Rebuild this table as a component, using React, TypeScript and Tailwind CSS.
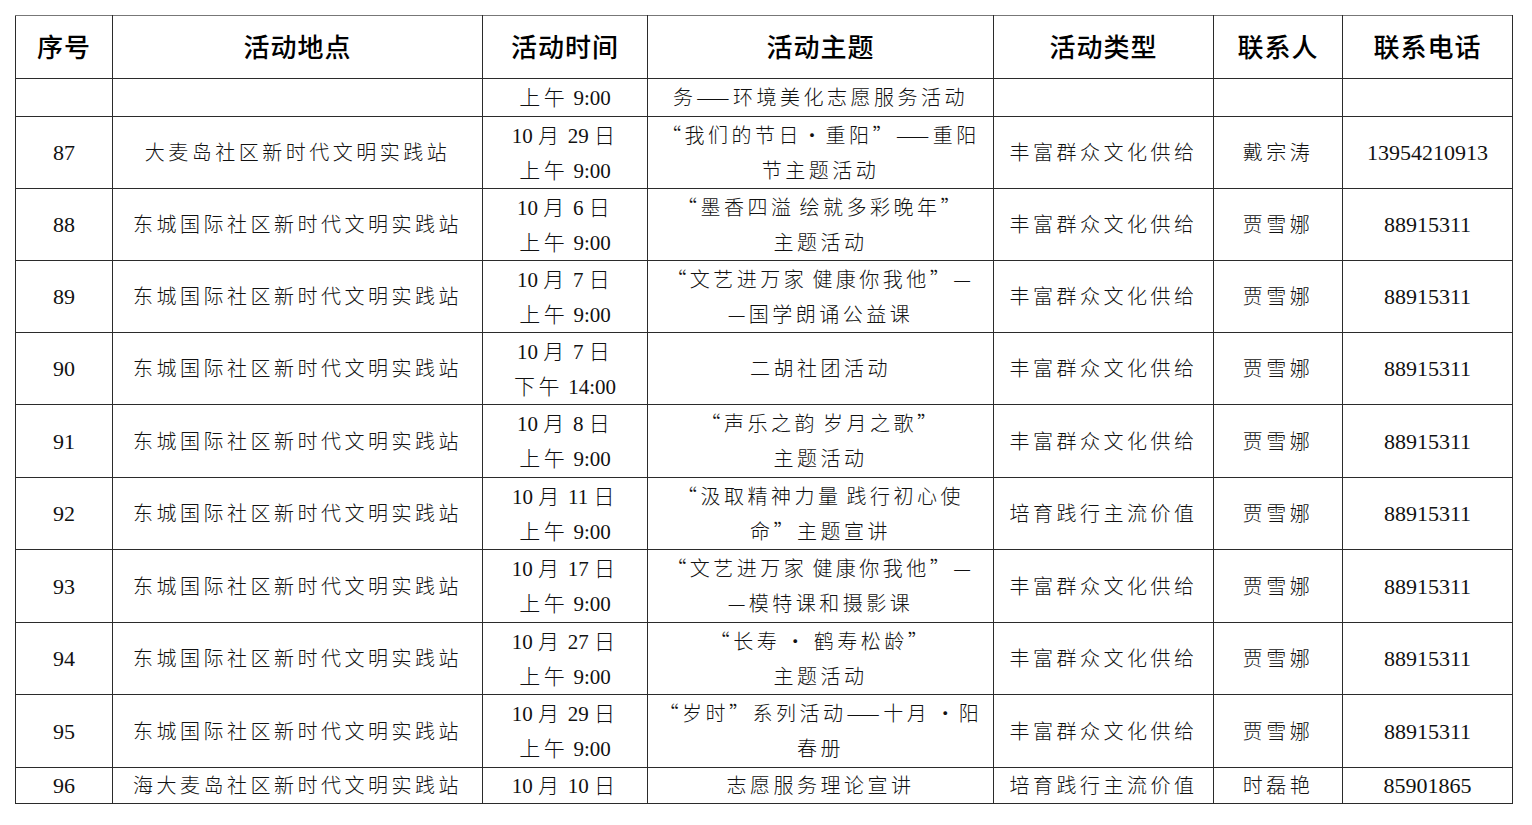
import React from 'react';

type Row = {
  no: string;
  place: string;
  time: string[];
  theme: string[];
  kind: string;
  person: string;
  phone: string;
  h: string;
};

const rows: Row[] = [
  { no: '', place: '', time: ['上午 9:00'], theme: ['务——环境美化志愿服务活动'], kind: '', person: '', phone: '', h: 'h-[38px]' },
  { no: '87', place: '大麦岛社区新时代文明实践站', time: ['10 月 29 日', '上午 9:00'], theme: ['“我们的节日•重阳”——重阳', '节主题活动'], kind: '丰富群众文化供给', person: '戴宗涛', phone: '13954210913', h: 'h-[72px]' },
  { no: '88', place: '东城国际社区新时代文明实践站', time: ['10 月 6 日', '上午 9:00'], theme: ['“墨香四溢 绘就多彩晚年”', '主题活动'], kind: '丰富群众文化供给', person: '贾雪娜', phone: '88915311', h: 'h-[72px]' },
  { no: '89', place: '东城国际社区新时代文明实践站', time: ['10 月 7 日', '上午 9:00'], theme: ['“文艺进万家 健康你我他”—', '—国学朗诵公益课'], kind: '丰富群众文化供给', person: '贾雪娜', phone: '88915311', h: 'h-[72px]' },
  { no: '90', place: '东城国际社区新时代文明实践站', time: ['10 月 7 日', '下午 14:00'], theme: ['二胡社团活动'], kind: '丰富群众文化供给', person: '贾雪娜', phone: '88915311', h: 'h-[72px]' },
  { no: '91', place: '东城国际社区新时代文明实践站', time: ['10 月 8 日', '上午 9:00'], theme: ['“声乐之韵 岁月之歌”', '主题活动'], kind: '丰富群众文化供给', person: '贾雪娜', phone: '88915311', h: 'h-[73px]' },
  { no: '92', place: '东城国际社区新时代文明实践站', time: ['10 月 11 日', '上午 9:00'], theme: ['“汲取精神力量 践行初心使', '命”主题宣讲'], kind: '培育践行主流价值', person: '贾雪娜', phone: '88915311', h: 'h-[72px]' },
  { no: '93', place: '东城国际社区新时代文明实践站', time: ['10 月 17 日', '上午 9:00'], theme: ['“文艺进万家 健康你我他”—', '—模特课和摄影课'], kind: '丰富群众文化供给', person: '贾雪娜', phone: '88915311', h: 'h-[73px]' },
  { no: '94', place: '东城国际社区新时代文明实践站', time: ['10 月 27 日', '上午 9:00'], theme: ['“长寿 • 鹤寿松龄”', '主题活动'], kind: '丰富群众文化供给', person: '贾雪娜', phone: '88915311', h: 'h-[72px]' },
  { no: '95', place: '东城国际社区新时代文明实践站', time: ['10 月 29 日', '上午 9:00'], theme: ['“岁时”系列活动——十月 •阳', '春册'], kind: '丰富群众文化供给', person: '贾雪娜', phone: '88915311', h: 'h-[73px]' },
  { no: '96', place: '海大麦岛社区新时代文明实践站', time: ['10 月 10 日'], theme: ['志愿服务理论宣讲'], kind: '培育践行主流价值', person: '时磊艳', phone: '85901865', h: 'h-[36px]' },
];

const headers = ['序号', '活动地点', '活动时间', '活动主题', '活动类型', '联系人', '联系电话'];
const widths = ['w-[97px]', 'w-[370px]', 'w-[165px]', 'w-[346px]', 'w-[220px]', 'w-[129px]', 'w-[170px]'];

// CJK characters and full-width punctuation get the wide spacing, digits stay tight
function Runs({ text }: { text: string }) {
  const parts = text.split(/([\u4e00-\u9fff\u3000-\u303f\uff00-\uffef\u2014\u201c\u201d\u2022]+)/);
  return (
    <>
      {parts.map((p, i) =>
        i % 2 === 1 ? (
          <span key={i} className="tracking-[3.5px] font-['Noto_Sans_CJK_SC',sans-serif]">{p}</span>
        ) : (
          <span key={i}>{p}</span>
        )
      )}
    </>
  );
}

function Lines({ lines }: { lines: string[] }) {
  return (
    <div className="flex flex-col items-center">
      {lines.map((l, i) => (
        <div key={i} className="h-[35px] flex items-center whitespace-nowrap leading-[35px]">
          <div>
            <Runs text={l} />
          </div>
        </div>
      ))}
    </div>
  );
}

const cell = 'border-[1.5px] border-[#2b2b2b] text-center align-middle p-0';

export default function App() {
  return (
    <div className="bg-white w-[1532px] h-[825px] pt-[15px] pl-[15px] font-['Liberation_Serif','Noto_Sans_CJK_SC',serif] text-[#111]">
      <table className="table-fixed border-collapse w-[1497px]">
        <colgroup>
          {widths.map((w, i) => (
            <col key={i} className={w} />
          ))}
        </colgroup>
        <thead>
          <tr className="h-[63px]">
            {headers.map((h) => (
              <th
                key={h}
                className={`${cell} border-t-[#777] pb-[4px] font-['Noto_Sans_CJK_SC',sans-serif] font-medium text-[26px] text-black tracking-[1px]`}
              >
                {h}
              </th>
            ))}
          </tr>
        </thead>
        <tbody className="text-[20px] font-light">
          {rows.map((r, i) => (
            <tr key={i} className={r.h}>
              <td className={`${cell} text-[22px] font-normal`}>{r.no}</td>
              <td className={cell}><Lines lines={[r.place]} /></td>
              <td className={`${cell} text-[21px]`}><Lines lines={r.time} /></td>
              <td className={cell}><Lines lines={r.theme} /></td>
              <td className={cell}><Lines lines={[r.kind]} /></td>
              <td className={cell}><Lines lines={[r.person]} /></td>
              <td className={`${cell} text-[22px] font-normal`}>{r.phone}</td>
            </tr>
          ))}
        </tbody>
      </table>
    </div>
  );
}
